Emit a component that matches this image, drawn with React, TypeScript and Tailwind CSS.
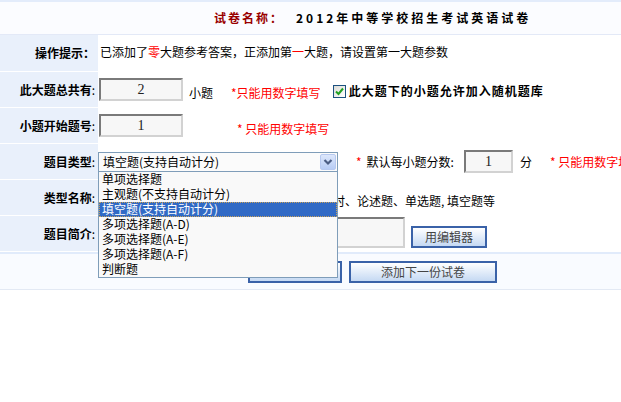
import React from "react";

const F = "font-['Noto_Sans_CJK_SC','Noto_Sans',sans-serif]";

function Label({ text, colon = ":" }: { text: string; colon?: string }) {
  return (
    <div className="w-[98px] shrink-0 bg-[#e9f0fb] flex items-center justify-end pr-[3px] text-[12px] text-black whitespace-nowrap">
      <span className="font-bold">{text}</span>
      <span className={colon === "：" ? "font-bold" : "font-normal"}>{colon}</span>
    </div>
  );
}

function Box({ value, w }: { value: string; w: string }) {
  return (
    <div
      className={`${w} shrink-0 h-[23px] border-2 border-t-[#7a7a7a] border-l-[#7a7a7a] border-r-[#d2d2d2] border-b-[#d2d2d2] bg-[#f7f7f7] flex items-center justify-center text-[14px] font-['Liberation_Serif',serif] text-[#222]`}
    >
      {value}
    </div>
  );
}

function Btn({ children, w }: { children?: React.ReactNode; w: string }) {
  return (
    <div
      className={`${w} shrink-0 h-[22px] border-2 border-[#3a62a8] bg-gradient-to-b from-[#ffffff] to-[#c5d9f3] flex items-center justify-center text-[12px] text-[#444] whitespace-nowrap`}
    >
      {children}
    </div>
  );
}

const options = [
  "单项选择题",
  "主观题(不支持自动计分)",
  "填空题(支持自动计分)",
  "多项选择题(A-D)",
  "多项选择题(A-E)",
  "多项选择题(A-F)",
  "判断题",
];

export default function App() {
  return (
    <div className={`w-[621px] h-[402px] bg-white overflow-hidden ${F} text-[12px] text-black leading-none`}>
      <div className="h-[2px] bg-[#e3ecfb]" />
      <div className="h-[33px] bg-[#fbfcff] border-b border-[#e3e9f7] flex items-center pl-[214px] font-bold text-[12px] whitespace-nowrap">
        <span className="text-[#990000] tracking-[2px]">试卷名称：</span>
        <span className="ml-[12px] tracking-[3px]">2012年中等学校招生考试英语试卷</span>
      </div>

      <div className="flex flex-col gap-[1px]">
        {/* Row 1 */}
        <div className="flex h-[36px]">
          <Label text="操作提示" colon="：" />
          <div className="flex-1 min-w-0 flex items-center pl-[2px] pb-[2px] whitespace-nowrap">
            已添加了<span className="text-[#ff0000]">零</span>大题参考答案，正添加第<span className="text-[#ff0000]">一</span>大题，请设置第一大题参数
          </div>
        </div>

        {/* Row 2 */}
        <div className="flex h-[35px]">
          <Label text="此大题总共有" />
          <div className="flex-1 min-w-0 flex items-center pl-[1px] whitespace-nowrap">
            <Box value="2" w="w-[84px]" />
            <span className="shrink-0 ml-[6px] pt-[7px]">小题</span>
            <span className="shrink-0 ml-[18px] pt-[7px] text-[#ff0000]">*只能用数字填写</span>
            <div className="shrink-0 ml-[12px] w-[13px] h-[13px] border border-[#1c5180] bg-gradient-to-br from-[#dcdcd7] to-[#ffffff] flex items-center justify-center mt-[3px]">
              <svg width="9" height="9" viewBox="0 0 9 9">
                <path d="M1 4.5 L3.5 7 L8 1.5" stroke="#21a121" strokeWidth="2" fill="none" />
              </svg>
            </div>
            <span className="shrink-0 ml-[3px] pt-[3px] font-bold tracking-[1px]">此大题下的小题允许加入随机题库</span>
          </div>
        </div>

        {/* Row 3 */}
        <div className="flex h-[35px]">
          <Label text="小题开始题号" />
          <div className="flex-1 min-w-0 flex items-center pl-[1px] whitespace-nowrap">
            <Box value="1" w="w-[84px]" />
            <span className="shrink-0 ml-[54px] pt-[7px] text-[#ff0000]">* 只能用数字填写</span>
          </div>
        </div>

        {/* Row 4 */}
        <div className="flex h-[35px]">
          <Label text="题目类型" />
          <div className="flex-1 min-w-0 flex items-center whitespace-nowrap">
            <div className="shrink-0 relative w-[240px] h-[20px] border border-[#7f9db9] bg-[#fbfbfb] z-10">
              <div className="h-full flex items-center pl-[4px]">填空题(支持自动计分)</div>
              <div className="absolute right-[1px] top-[1px] w-[16px] h-[16px] rounded-[2px] border border-[#b7c9f0] bg-gradient-to-b from-[#dde7fb] to-[#b7ccf5] flex items-center justify-center">
                <svg width="10" height="8" viewBox="0 0 10 8">
                  <path d="M1.5 2 L5 5.5 L8.5 2" stroke="#4b5d84" strokeWidth="2.2" fill="none" />
                </svg>
              </div>
              <div className="absolute left-[-1px] top-full w-[240px] border border-[#7f9db9] bg-[#f9f9f9]">
                {options.map((o, i) =>
                  i === 2 ? (
                    <div
                      key={o}
                      className="h-[15px] flex items-center pl-[2px] bg-[#316ac5] text-white border border-dotted border-[#c9a25a]"
                    >
                      {o}
                    </div>
                  ) : (
                    <div key={o} className="h-[15px] flex items-center pl-[3px]">
                      {o}
                    </div>
                  )
                )}
              </div>
            </div>
            <span className="shrink-0 ml-[18px] text-[#ff0000]">*</span>
            <span className="shrink-0 ml-[5px]">默认每小题分数:</span>
            <div className="shrink-0 ml-[10px]">
              <Box value="1" w="w-[49px]" />
            </div>
            <span className="shrink-0 ml-[7px]">分</span>
            <span className="shrink-0 ml-[18px] text-[#ff0000]">* 只能用数字填写</span>
          </div>
        </div>

        {/* Row 5 */}
        <div className="flex h-[35px]">
          <Label text="类型名称" />
          <div className="flex-1 min-w-0 flex items-center pl-[235px] pt-[6px] whitespace-nowrap">
            时、论述题、单选题, 填空题等
          </div>
        </div>

        {/* Row 6 */}
        <div className="flex h-[35px]">
          <Label text="题目简介" />
          <div className="flex-1 min-w-0 flex items-end pb-[3px] pl-[1px]">
            <div className="shrink-0 w-[306px] h-[31px] border-2 border-t-[#7a7a7a] border-l-[#7a7a7a] border-r-[#d2d2d2] border-b-[#d2d2d2] bg-[#f7f7f7]" />
            <div className="shrink-0 ml-[6px]">
              <Btn w="w-[76px]">用编辑器</Btn>
            </div>
          </div>
        </div>
      </div>

      <div className="mt-[1px] h-[2px] bg-[#e1ebfb]" />
      <div className="h-[36px] bg-[#f9fbff] border-b border-[#e3e9f4] flex items-center pl-[248px] gap-[7px]">
        <Btn w="w-[94px]" />
        <Btn w="w-[148px]">添加下一份试卷</Btn>
      </div>
    </div>
  );
}
